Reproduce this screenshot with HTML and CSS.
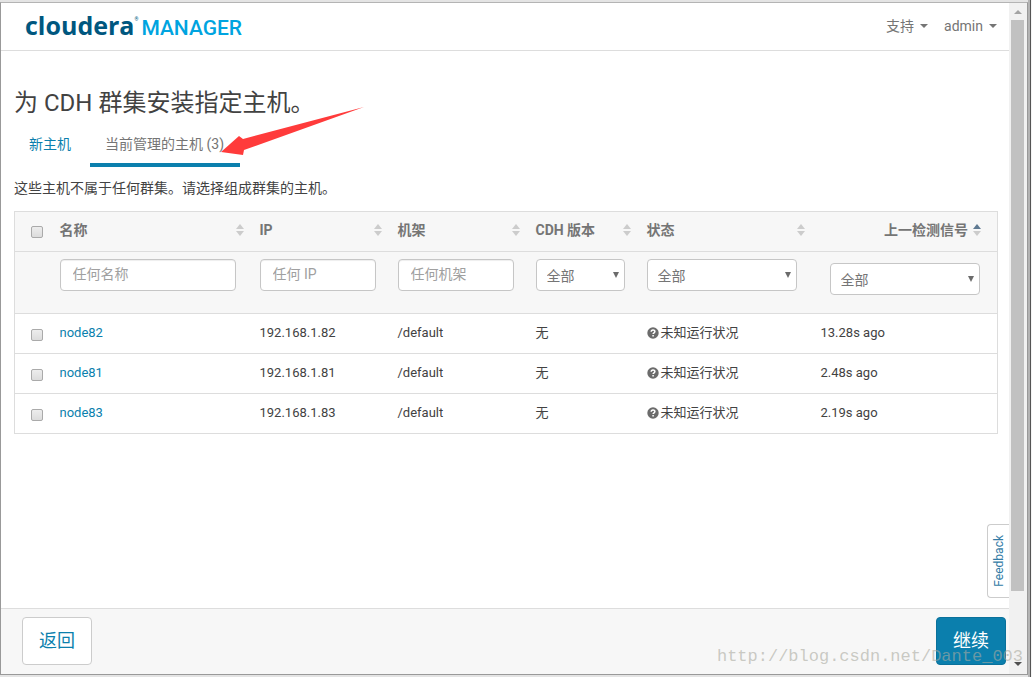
FILE: index.html
```html
<!DOCTYPE html>
<html lang="zh-CN">
<head>
<meta charset="utf-8">
<title>Cloudera Manager</title>
<link rel="stylesheet" href="styles.css">
</head>
<body>
<div class="window">
  <div class="page">
    <header class="topbar">
      <a class="brand" href="#"><span class="brand-name">cloudera</span><span class="brand-mark">®</span><span class="brand-product">MANAGER</span></a>
      <nav class="menu">
        <button class="menu-item" type="button">支持<span class="caret"></span></button>
        <button class="menu-item" type="button">admin<span class="caret"></span></button>
      </nav>
    </header>

    <main class="content">
      <h1 class="title">为 CDH 群集安装指定主机。</h1>
      <nav class="tabs">
        <a class="tab" href="#">新主机</a>
        <a class="tab tab-active" href="#">当前管理的主机 (3)
          <svg class="pointer" width="150" height="52" viewBox="0 0 150 52" aria-hidden="true"><path d="M145 1 24 33 20 30 2 46 24 49 25 44Z" fill="#ff3b3b"/></svg></a>
      </nav>
      <p class="intro">这些主机不属于任何群集。请选择组成群集的主机。</p>

      <table class="hosts">
        <colgroup>
          <col class="col-check"><col class="col-name"><col class="col-ip"><col class="col-rack"><col class="col-version"><col class="col-status"><col class="col-beat">
        </colgroup>
        <thead>
          <tr class="heads">
            <th><input class="check" type="checkbox" aria-label="全选"></th>
            <th><div class="head">名称<span class="sort"></span></div></th>
            <th><div class="head">IP<span class="sort"></span></div></th>
            <th><div class="head">机架<span class="sort"></span></div></th>
            <th><div class="head">CDH 版本<span class="sort"></span></div></th>
            <th><div class="head">状态<span class="sort"></span></div></th>
            <th class="beat"><div class="head head-end">上一检测信号<span class="sort sort-up"></span></div></th>
          </tr>
          <tr class="filters">
            <td></td>
            <td class="wide"><input class="field" type="text" placeholder="任何名称" aria-label="名称"></td>
            <td><input class="field" type="text" placeholder="任何 IP" aria-label="IP"></td>
            <td><input class="field" type="text" placeholder="任何机架" aria-label="机架"></td>
            <td><div class="picker"><select class="field select" aria-label="CDH 版本"><option>全部</option></select></div></td>
            <td class="wide"><div class="picker"><select class="field select" aria-label="状态"><option>全部</option></select></div></td>
            <td class="beat"><div class="picker"><select class="field select" aria-label="上一检测信号"><option>全部</option></select></div></td>
          </tr>
        </thead>
        <tbody>
          <tr>
            <td><input class="check" type="checkbox" aria-label="node82"></td>
            <td><a class="link" href="#">node82</a></td><td>192.168.1.82</td><td>/default</td><td>无</td>
            <td><span class="status"><svg class="unknown" viewBox="0 0 12 12" aria-hidden="true"><circle cx="6" cy="6" r="5.7" fill="#6b6b6b"/><path d="M4.2 4.7C4.2 2.4 7.9 2.4 7.9 4.5 7.9 5.8 6.1 5.8 6.1 7.1M6.1 8.1V9.5" fill="none" stroke="#fff" stroke-width="1.5"/></svg>未知运行状况</span></td><td>13.28s ago</td>
          </tr>
          <tr>
            <td><input class="check" type="checkbox" aria-label="node81"></td>
            <td><a class="link" href="#">node81</a></td><td>192.168.1.81</td><td>/default</td><td>无</td>
            <td><span class="status"><svg class="unknown" viewBox="0 0 12 12" aria-hidden="true"><circle cx="6" cy="6" r="5.7" fill="#6b6b6b"/><path d="M4.2 4.7C4.2 2.4 7.9 2.4 7.9 4.5 7.9 5.8 6.1 5.8 6.1 7.1M6.1 8.1V9.5" fill="none" stroke="#fff" stroke-width="1.5"/></svg>未知运行状况</span></td><td>2.48s ago</td>
          </tr>
          <tr>
            <td><input class="check" type="checkbox" aria-label="node83"></td>
            <td><a class="link" href="#">node83</a></td><td>192.168.1.83</td><td>/default</td><td>无</td>
            <td><span class="status"><svg class="unknown" viewBox="0 0 12 12" aria-hidden="true"><circle cx="6" cy="6" r="5.7" fill="#6b6b6b"/><path d="M4.2 4.7C4.2 2.4 7.9 2.4 7.9 4.5 7.9 5.8 6.1 5.8 6.1 7.1M6.1 8.1V9.5" fill="none" stroke="#fff" stroke-width="1.5"/></svg>未知运行状况</span></td><td>2.19s ago</td>
          </tr>
        </tbody>
      </table>
    </main>

    <button class="feedback" type="button">Feedback</button>

    <footer class="actions">
      <button class="btn" type="button">返回</button>
      <button class="btn btn-primary" type="button">继续</button>
    </footer>
  </div>
  <div class="scrollbar" aria-hidden="true">
    <span class="arrow arrow-up"></span>
    <span class="thumb"></span>
    <span class="arrow arrow-down"></span>
  </div>
  <div class="watermark">http://blog.csdn.net/Dante_003</div>
</div>
</body>
</html>
```

FILE: styles.css
```css
* { box-sizing: border-box; }

body {
  margin: 0;
  padding: 2px 4px 2px 0;
  min-height: 100vh;
  display: flex;
  background: linear-gradient(to left, #f4f4f4 1px, #555 1px 2px, #b4b4b4 2px 4px, #e4e4e4 4px);
  color: #424242;
  font: 14px/20px Roboto, "Noto Sans CJK SC", sans-serif;
}

button, input, select { font: inherit; }
a { text-decoration: none; }

.window {
  position: relative;
  flex: 1;
  display: flex;
  background: #fff;
  border: 1px solid #999;
  border-top-color: #b4b4b4;
}

.page {
  position: relative;
  flex: 1;
  min-width: 0;
  display: flex;
  flex-direction: column;
}

.topbar {
  display: flex;
  justify-content: space-between;
  align-items: center;
  height: 48px;
  padding: 0 12px 0 24px;
  border-bottom: 1px solid #ddd;
}

.brand { display: flex; align-items: baseline; }
.brand-name { color: #00577f; font: 700 25px/32px "Open Sans", sans-serif; }
.brand-mark { color: #00577f; font-size: 5px; align-self: flex-start; }
.brand-product { margin-left: 3px; color: #00a4e0; font: 500 21px/32px Roboto, sans-serif; }

.menu { display: flex; gap: 16px; padding-bottom: 1px; }
.menu-item {
  display: flex;
  align-items: center;
  gap: 6px;
  padding: 0;
  border: 0;
  background: none;
  color: #757575;
}
.caret { border: 4px solid transparent; border-top-color: #757575; border-bottom: 0; }

.content { flex: 1; padding: 36px 11px 0 13px; }
.title { margin: 0; font-size: 24px; line-height: 32px; font-weight: 400; }

.tabs { display: flex; margin: 4px 0 11px; }
.tab {
  position: relative;
  padding: 11px 15px 9px;
  color: #0b7fad;
  border-bottom: 4px solid transparent;
  margin-right: 4px;
  white-space: nowrap;
}
.tab-active { padding-right: 16px; color: #757575; border-bottom-color: #0b7fad; }
.pointer { position: absolute; left: 129px; top: -17px; }

.intro { margin: 0 0 13px; }

.hosts {
  width: 100%;
  table-layout: fixed;
  border-collapse: collapse;
  border: 1px solid #ddd;
  font-size: 13px;
}
.col-check { width: 37px; }
.col-ip, .col-rack { width: 138px; }
.col-version { width: 111px; }
.col-status { width: 174px; }
.col-beat { width: 185px; }

.hosts th, .hosts td {
  height: 40px;
  padding: 0 8px 2px;
  border-top: 1px solid #ddd;
  text-align: left;
  vertical-align: middle;
}
.hosts thead { background: #f7f7f7; color: #757575; font-size: 14px; }
.hosts th { padding-bottom: 3px; }
.hosts .filters td { height: 62px; padding: 7px 14px 0 8px; vertical-align: top; }
.hosts th.beat { padding-right: 16px; }
.hosts .filters .wide { padding-right: 16px; }
.hosts .filters .beat { padding: 11px 17px 0; }

.head { display: flex; justify-content: space-between; align-items: center; }
.head-end { justify-content: flex-end; gap: 5px; }
.sort { display: grid; gap: 2px; }
.sort::before, .sort::after { content: ""; border: 4px solid transparent; }
.sort::before { border-top: 0; border-bottom: 5px solid #ccc; }
.sort::after { border-bottom: 0; border-top: 5px solid #ccc; }
.sort-up::before { border-bottom-color: #5f7a92; }

.check {
  appearance: none;
  display: block;
  width: 12px;
  height: 12px;
  margin: 4px 0 0 8px;
  border: 1px solid #aaa;
  border-radius: 2px;
  background: linear-gradient(#ededed, #dcdcdc);
}

.field {
  display: block;
  width: 100%;
  height: 32px;
  padding: 4px 12px 6px;
  border: 1px solid #c6c6c6;
  border-radius: 4px;
  background: #fff;
  color: #757575;
  box-shadow: inset 0 1px 1px rgba(0, 0, 0, 0.07);
}
.field::placeholder { color: #a0a0a0; }
.select { appearance: none; padding: 6px 10px 4px; box-shadow: none; }
.picker { display: grid; align-items: center; }
.picker > .select, .picker::after { grid-area: 1 / 1; }
.picker::after {
  content: "";
  justify-self: end;
  margin-right: 6px;
  border: 3px solid transparent;
  border-top: 6px solid #6b6b6b;
  border-bottom: 0;
  pointer-events: none;
}

.link { color: #0b7fad; }
.status { display: flex; align-items: center; gap: 2px; white-space: nowrap; }
.unknown { width: 12px; height: 12px; }

.feedback {
  position: absolute;
  right: 0;
  bottom: 76px;
  width: 22px;
  height: 74px;
  padding: 0;
  border: 1px solid #ccc;
  border-right: 0;
  border-radius: 4px 0 0 4px;
  background: #fff;
  color: #337ca6;
  font-size: 12px;
  writing-mode: sideways-lr;
}

.actions {
  display: flex;
  justify-content: space-between;
  padding: 8px 3px 9px 21px;
  background: #f7f7f7;
  border-top: 1px solid #ddd;
}
.btn {
  height: 48px;
  padding: 0 16px;
  border: 1px solid #ccc;
  border-radius: 4px;
  background: #fff;
  color: #0b7fad;
  font-size: 18px;
}
.btn-primary { background: #0b7fad; border-color: #0a719b; color: #fff; }

.scrollbar {
  width: 18px;
  display: flex;
  flex-direction: column;
  align-items: center;
  padding: 7px 1px 8px 0;
  background: #f1f1f1;
}
.arrow { border: 4px solid transparent; }
.arrow-up { border-top: 0; border-bottom-color: #a3a3a3; }
.arrow-down { border-bottom: 0; border-top-color: #505050; }
.thumb { width: 13px; flex: 1; margin: 6px 0 71px; background: #c1c1c1; }

.watermark {
  position: absolute;
  right: 4px;
  bottom: 7px;
  color: rgba(170, 170, 160, 0.6);
  font: 17px/20px "Liberation Mono", monospace;
  pointer-events: none;
}
```
